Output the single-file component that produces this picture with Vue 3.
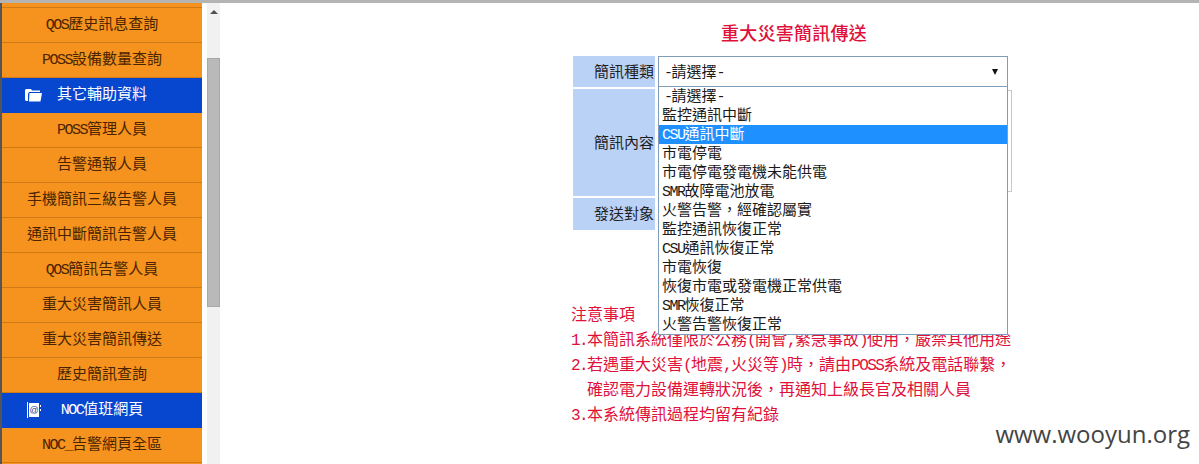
<template>
  <div class="page">
    <nav class="side">
      <div
        v-for="item in menu"
        :key="item.label"
        class="side-item"
        :class="{ group: item.icon }"
      >
        <svg v-if="item.icon === 'folder'" class="side-icon" viewBox="0 0 18 14" width="18" height="14">
          <path d="M0 2 L1 1 H6 L7 2.5 H15 V4 H4 L3 6 V13 H1 L0 12 Z" fill="#fff" />
          <path d="M4.5 5 H17 L15.5 13.5 H4 Z" fill="#fff" />
        </svg>
        <svg v-if="item.icon === 'mail'" class="side-icon mail" viewBox="0 0 14 16" width="14" height="16">
          <rect x="0" y="0" width="1" height="16" fill="#fff" />
          <rect x="2" y="1" width="10" height="14" fill="#fff" />
          <rect x="13" y="3" width="1" height="2" fill="#fff" />
          <rect x="13" y="7" width="1" height="2" fill="#fff" />
          <text x="7" y="11" text-anchor="middle" class="at">@</text>
        </svg>
        <span class="side-label">
          <template v-for="(p, i) in parts(item.label)" :key="i"><span :class="{ latin: p.latin }">{{ p.text }}</span></template>
        </span>
      </div>
    </nav>

    <div class="scroll">
      <div class="scroll-up"></div>
      <div class="scroll-thumb"></div>
    </div>

    <main class="main">
      <h1 class="title">重大災害簡訊傳送</h1>

      <div class="form">
        <div class="label">簡訊種類</div>
        <div class="field">
          <div class="select">
            <span>
              <template v-for="(p, i) in parts(options[0])" :key="i"><span :class="{ latin: p.latin }">{{ p.text }}</span></template>
            </span>
            <i class="caret"></i>
          </div>
          <ul class="options">
            <li
              v-for="(opt, n) in options"
              :key="opt"
              :class="{ active: n === 2, first: n === 0 }"
            >
              <template v-for="(p, i) in parts(opt)" :key="i"><span :class="{ latin: p.latin }">{{ p.text }}</span></template>
            </li>
          </ul>
        </div>
        <div class="label">簡訊內容</div>
        <div class="field">
          <div class="textarea"></div>
        </div>
        <div class="label">發送對象</div>
        <div class="field"></div>
      </div>

      <div class="notes">
        <p>注意事項</p>
        <p v-for="line in notes" :key="line.text" :class="{ indent: line.indent }">
          <template v-for="(p, i) in parts(line.text)" :key="i"><span :class="{ latin: p.latin }">{{ p.text }}</span></template>
        </p>
      </div>
    </main>

    <div class="mark">www.wooyun.org</div>
  </div>
</template>

<script setup>
const menu = [
  { label: 'QOS歷史訊息查詢' },
  { label: 'POSS設備數量查詢' },
  { label: '其它輔助資料', icon: 'folder' },
  { label: 'POSS管理人員' },
  { label: '告警通報人員' },
  { label: '手機簡訊三級告警人員' },
  { label: '通訊中斷簡訊告警人員' },
  { label: 'QOS簡訊告警人員' },
  { label: '重大災害簡訊人員' },
  { label: '重大災害簡訊傳送' },
  { label: '歷史簡訊查詢' },
  { label: 'NOC值班網頁', icon: 'mail' },
  { label: 'NOC_告警網頁全區' }
]

const options = [
  '-請選擇-',
  '監控通訊中斷',
  'CSU通訊中斷',
  '市電停電',
  '市電停電發電機未能供電',
  'SMR故障電池放電',
  '火警告警，經確認屬實',
  '監控通訊恢復正常',
  'CSU通訊恢復正常',
  '市電恢復',
  '恢復市電或發電機正常供電',
  'SMR恢復正常',
  '火警告警恢復正常'
]

const notes = [
  { text: '1.本簡訊系統僅限於公務(開會,緊急事故)使用，嚴禁其他用途' },
  { text: '2.若遇重大災害(地震,火災等)時，請由POSS系統及電話聯繫，' },
  { text: '確認電力設備運轉狀況後，再通知上級長官及相關人員', indent: true },
  { text: '3.本系統傳訊過程均留有紀錄' }
]

// the original font has half-width latin, so latin runs get a squeezed mono face
const parts = (text) => {
  return text.split(/([A-Za-z0-9_.,()-]+)/).filter(Boolean).map(t => ({
    text: t,
    latin: /^[A-Za-z0-9_.,()-]+$/.test(t)
  }))
}
</script>

<style>
html, body {
  margin: 0;
  background: #fff;
  overflow: hidden;
}
</style>

<style scoped>
.page {
  position: relative;
  display: flex;
  align-items: flex-start;
  width: 1199px;
  height: 464px;
  overflow: hidden;
  box-sizing: border-box;
  border-top: 3px solid #b4b4b4;
  font-family: "Noto Sans CJK TC", sans-serif;
  color: #1a1a1a;
}

/* 15px mono advances 9px, pull it back to half an em */
.latin {
  font-family: "Liberation Mono", monospace;
  letter-spacing: -1.5px;
  line-height: 0;
}

.side {
  flex: none;
  width: 200px;
  height: 461px;
  margin-left: 2px;
  padding-top: 5px;
  background: #f6931e;
  box-shadow: -2px 0 0 #555;
}

.side-item {
  position: relative;
  display: flex;
  align-items: center;
  justify-content: center;
  height: 34px;
  box-sizing: content-box;
  border-bottom: 1px solid #d07a17;
  font-size: 15px;
  color: #4a2400;
}

.side-item:first-child {
  box-shadow: 0 -1px 0 #d07a17;
}

.side-label {
  line-height: 15px;
  margin-top: -5px;
}

.group {
  background: #0746cf;
  color: #fff;
  border-bottom-color: #0746cf;
}

.side-icon {
  position: absolute;
  left: 23px;
  top: 10px;
}

.side-icon.mail {
  left: 25px;
  top: 9px;
}

.at {
  font-family: "Liberation Sans", sans-serif;
  font-size: 9px;
  fill: #1a3f8f;
}

.scroll {
  flex: none;
  width: 13px;
  height: 461px;
  margin-left: 5px;
  background: #f1f1f1;
  display: flex;
  flex-direction: column;
  align-items: center;
}

.scroll-up {
  width: 0;
  height: 0;
  margin-top: 7px;
  border-left: 4px solid transparent;
  border-right: 4px solid transparent;
  border-bottom: 4px solid #505050;
}

.scroll-thumb {
  width: 13px;
  height: 249px;
  margin-top: 44px;
  background: #b9b9b9;
  box-sizing: border-box;
  border: 1px solid #a8a8a8;
}

.main {
  flex: none;
  width: 440px;
  margin-left: 351px;
}

.title {
  margin: 19px 0 0;
  height: 34px;
  padding-left: 6px;
  font-size: 18px;
  line-height: 20px;
  letter-spacing: 0.25px;
  font-weight: 500;
  text-align: center;
  color: #e0103a;
}

.form {
  display: grid;
  grid-template-columns: 82px 350px;
  grid-template-rows: 31px 107px 32px;
  column-gap: 3px;
  row-gap: 2px;
  margin-left: 2px;
}

.label {
  display: flex;
  align-items: center;
  justify-content: flex-end;
  padding: 0 1px 3px 0;
  box-sizing: border-box;
  background: #bbd2f7;
  font-size: 15px;
  color: #1f1f1f;
}

.field {
  position: relative;
}

.select {
  display: flex;
  align-items: center;
  justify-content: space-between;
  height: 31px;
  box-sizing: border-box;
  padding: 0 9px 2px 5px;
  background: #fff;
  border: 1px solid #7f9db9;
  font-size: 15px;
}

.caret {
  width: 0;
  height: 0;
  margin-top: 2px;
  border-left: 3px solid transparent;
  border-right: 3px solid transparent;
  border-top: 6px solid #111;
}

.options {
  position: absolute;
  z-index: 2;
  left: 0;
  right: 0;
  top: 30px;
  margin: 0;
  padding: 0;
  list-style: none;
  background: #fff;
  border: 1px solid #7f9db9;
  font-size: 15px;
}

.options li {
  height: 19px;
  line-height: 15px;
  padding-left: 3px;
  white-space: nowrap;
  color: #1a1a1a;
}

.options li.first {
  padding-left: 5px;
}

.options li.active {
  background: #1e90ff;
  color: #fff;
}

.textarea {
  width: 354px;
  height: 102px;
  margin-top: 1px;
  box-sizing: border-box;
  border: 1px solid #c9c9c9;
  background: #fff;
}

.notes {
  margin-top: 71px;
  font-size: 16px;
  color: #e0103a;
  white-space: nowrap;
}

.notes p {
  margin: 0;
  height: 25px;
  line-height: 25px;
}

.notes .indent {
  padding-left: 16px;
}

.notes .latin {
  letter-spacing: -1.6px;
}

.mark {
  position: absolute;
  right: 9px;
  bottom: 15px;
  font-family: "Open Sans", sans-serif;
  font-size: 24px;
  line-height: 30px;
  color: #444;
}
</style>
